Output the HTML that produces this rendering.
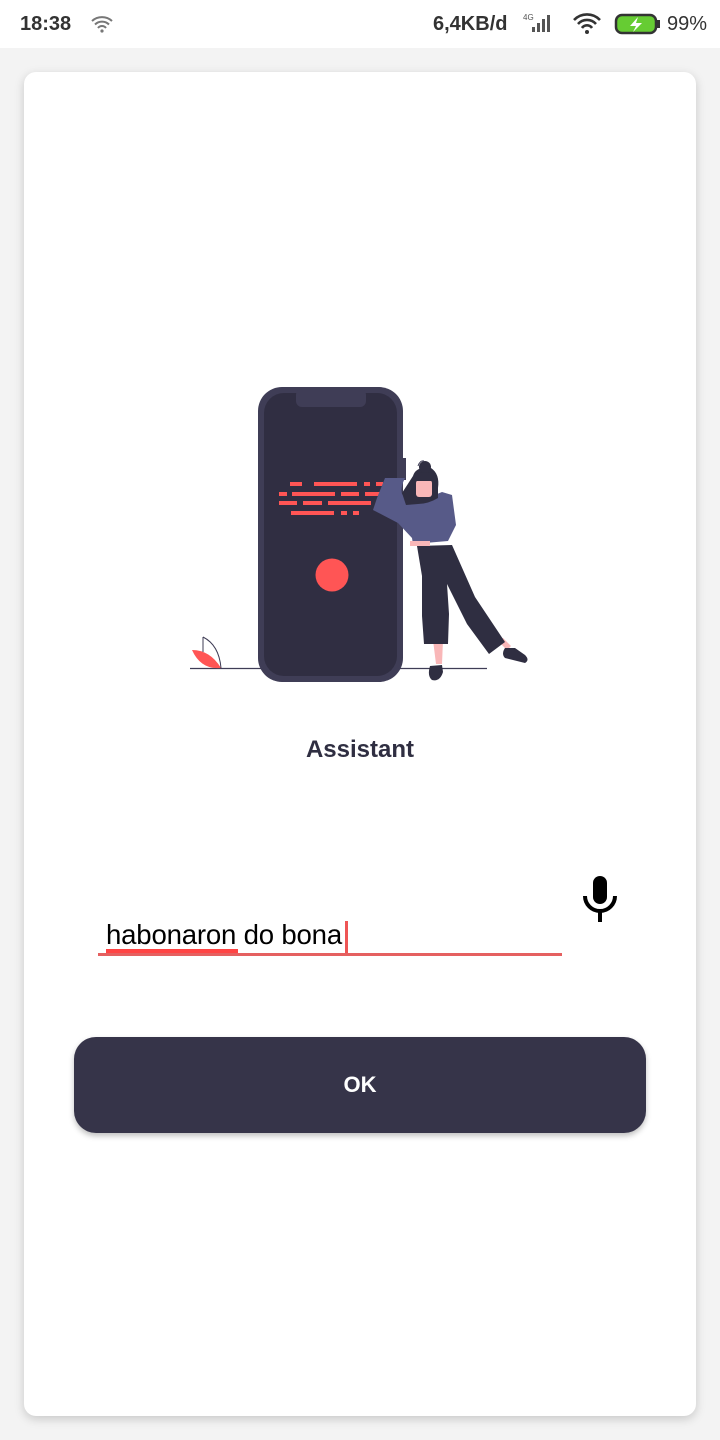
<!DOCTYPE html>
<html><head><meta charset="utf-8"><style>
body{margin:0;width:720px;height:1440px;background:#f3f3f3;font-family:"Liberation Sans",sans-serif;position:relative;overflow:hidden}
.sb{position:absolute;top:0;left:0;width:720px;height:48px;background:#fff}
.card{position:absolute;left:24px;top:72px;width:672px;height:1344px;background:#fff;border-radius:12px;box-shadow:0 3px 10px rgba(0,0,0,.18)}
.t{position:absolute;font-weight:bold;color:#333}
</style></head><body>
<div class="sb">
<div class="t" style="left:20px;top:13px;font-size:20px">18:38</div>
<svg style="position:absolute;left:90px;top:14px" width="26" height="20" viewBox="0 0 26 20"><path d="M2 7a15 15 0 0 1 20 0M5 10.5a10 10 0 0 1 14 0M8 14a5 5 0 0 1 8 0" stroke="#777" stroke-width="2" fill="none"/><circle cx="12" cy="17" r="1.6" fill="#777"/></svg>
<div class="t" style="left:433px;top:13px;font-size:20px">6,4KB/d</div>
<svg style="position:absolute;left:522px;top:12px" width="40" height="22"><text x="1" y="8" font-size="8" fill="#555" font-family="Liberation Sans">4G</text><rect x="10" y="15" width="3" height="5" fill="#555"/><rect x="15" y="11" width="3" height="9" fill="#555"/><rect x="20" y="7" width="3" height="13" fill="#555"/><rect x="25" y="3" width="3" height="17" fill="#555"/></svg>
<svg style="position:absolute;left:572px;top:12px" width="34" height="24" viewBox="0 0 34 24"><path d="M2 8a18 18 0 0 1 26 0M6 12a12 12 0 0 1 18 0M10 16a6 6 0 0 1 10 0" stroke="#333" stroke-width="2.6" fill="none"/><circle cx="15" cy="20" r="2" fill="#333"/></svg>
<svg style="position:absolute;left:614px;top:13px" width="48" height="22"><rect x="2" y="2" width="40" height="18" rx="6" fill="#6c3" stroke="#333" stroke-width="2.5"/><rect x="43" y="7" width="3" height="8" fill="#333"/><path d="M24 4l-8 9h6l-3 6 9-9h-6z" fill="#fff"/></svg>
<div class="t" style="left:667px;top:13px;font-size:20px;font-weight:normal">99%</div>
</div>
<div class="card"></div>
<svg style="position:absolute;left:0;top:0" width="720" height="720">
<line x1="190" y1="668.5" x2="487" y2="668.5" stroke="#3f3d56" stroke-width="1.2"/>
<path d="M192 650q18 0 29 18q-20 2 -29 -18z" fill="#f55"/>
<path d="M203 637q16 8 18 31" stroke="#3f3d56" fill="none" stroke-width="1"/><line x1="203" y1="637" x2="203" y2="652" stroke="#3f3d56"/>
<rect x="258" y="387" width="145" height="295" rx="24" fill="#3f3d56"/>
<rect x="264" y="393" width="133" height="283" rx="20" fill="#302e42"/>
<rect x="296" y="389" width="70" height="18" rx="6" fill="#3f3d56"/>
<rect x="403" y="458" width="3" height="22" fill="#3f3d56"/>
<g fill="#f55">
<rect x="290" y="482" width="12" height="4"/><rect x="314" y="482" width="43" height="4"/><rect x="364" y="482" width="6" height="4"/><rect x="376" y="482" width="7" height="4"/>
<rect x="279" y="492" width="8" height="4"/><rect x="292" y="492" width="43" height="4"/><rect x="341" y="492" width="18" height="4"/><rect x="365" y="492" width="20" height="4"/>
<rect x="279" y="501" width="18" height="4"/><rect x="303" y="501" width="19" height="4"/><rect x="328" y="501" width="43" height="4"/><rect x="377" y="501" width="8" height="4"/>
<rect x="291" y="511" width="43" height="4"/><rect x="341" y="511" width="6" height="4"/><rect x="353" y="511" width="6" height="4"/>
<circle cx="332" cy="575" r="16.5"/>
</g>
<!-- woman -->
<path d="M433 640l3 24 6 0 1-24zM497 640l10 10 4-4-8-8z" fill="#f9b7b8"/>
<path d="M417 546l5 30 0 40 2 28 24 0 1-30-2-30 20 40 22 30 16-12-30-45-23-52z" fill="#2f2e41"/>
<path d="M430 666q-3 10 2 14q8 2 11-8l-1-7z" fill="#2f2e41"/>
<path d="M505 648q-4 6 0 10l20 5q5-3 0-8l-10-7z" fill="#2f2e41"/>
<path d="M405 478q-5 10-3 16l10 10 8 -4 10 -3 12 -5 10 3 4 30-8 16-35 3-1-6-14-15-25-13 4-12 8-20z" fill="#575a88"/>
<path d="M410 541h20v5h-20z" fill="#f9b7b8"/>
<path d="M413 476q3-10 18-8q9 6 7 20v10q-10 6-20 6l-12 1-4-12z" fill="#2f2e41"/>
<rect x="416" y="480" width="16" height="17" rx="3" fill="#f9b7b8"/>
<path d="M412 478q5-8 20-5l5 8-22 0z" fill="#2f2e41"/>
<circle cx="425" cy="467" r="6" fill="#2f2e41"/>
<path d="M418 466q2-6 6-5" stroke="#3f3d56" fill="none"/>
</svg>
<div class="t" style="left:0;width:720px;text-align:center;top:736px;font-size:24px;color:#2f2e41">Assistant</div>
<div style="position:absolute;left:106px;top:919px;font-size:27.6px;color:#000;letter-spacing:-0.2px">habonaron do bona</div>
<div style="position:absolute;left:345px;top:921px;width:3px;height:33px;background:#e55"></div>
<div style="position:absolute;left:106px;top:949px;width:132px;height:4px;background:#f44"></div>
<div style="position:absolute;left:98px;top:953px;width:464px;height:3px;background:#e56060"></div>
<svg style="position:absolute;left:580px;top:874px" width="40" height="50" viewBox="0 0 40 50"><rect x="13" y="2" width="14" height="28" rx="7" fill="#000"/><path d="M5 22a15 15 0 0 0 30 0" stroke="#000" stroke-width="4" fill="none"/><rect x="18" y="36" width="4" height="12" fill="#000"/></svg>
<div style="position:absolute;left:74px;top:1037px;width:572px;height:96px;background:#363449;border-radius:22px;box-shadow:0 3px 6px rgba(0,0,0,.25);color:#fff;font-weight:bold;font-size:22px;text-align:center;line-height:96px">OK</div>
</body></html>
